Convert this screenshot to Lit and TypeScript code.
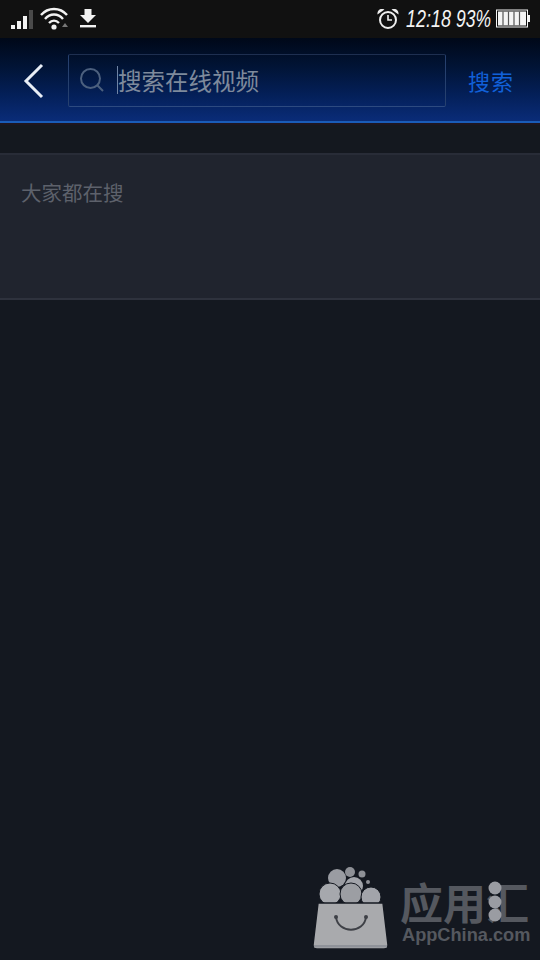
import { LitElement, css, html } from "lit";
import { customElement } from "lit/decorators.js";

@customElement("app-root")
export class AppRoot extends LitElement {
  static styles = css`
    :host {
      display: block;
      position: relative;
      width: 540px;
      height: 960px;
      overflow: hidden;
      background: #141820;
      font-family: "Noto Sans CJK SC", sans-serif;
    }
    .status {
      height: 38px;
      background: #111111;
      display: flex;
      align-items: center;
      justify-content: space-between;
      padding: 0 10px 0 11px;
      box-sizing: border-box;
    }
    .status-group {
      display: flex;
      align-items: center;
    }
    /* the digits are tall and narrow, so squeeze a regular face */
    .time,
    .pct {
      display: inline-block;
      color: #f4f4f4;
      font: italic 23px/1 "Liberation Sans", sans-serif;
      white-space: nowrap;
      transform-origin: left center;
    }
    .time {
      width: 45px;
      margin: 0 5px 0 7px;
      transform: scaleX(0.78);
    }
    .pct {
      width: 35px;
      margin-right: 5px;
      transform: scaleX(0.76);
    }
    .header {
      height: 83px;
      box-sizing: border-box;
      display: flex;
      align-items: center;
      background: linear-gradient(180deg, #000818 0%, #011436 35%, #04205a 70%, #0a2c78 100%);
      padding: 0 0 0 22px;
    }
    .back {
      width: 24px;
      height: 36px;
      margin-right: 22px;
      margin-top: 2px;
    }
    .search {
      width: 378px;
      height: 53px;
      box-sizing: border-box;
      margin-top: 1px;
      border: 1px solid #26406e;
      border-top-color: #1e2f50;
      border-bottom-color: #2d4a80;
      border-radius: 2px;
      display: flex;
      align-items: center;
      padding-left: 10px;
    }
    .caret {
      width: 1px;
      height: 28px;
      background: #6f84a4;
      margin: 0 0 0 12px;
    }
    .placeholder {
      color: #7e8a9c;
      font-size: 23.5px;
      line-height: 28px;
      margin-bottom: 1px;
    }
    .submit {
      color: #1160d8;
      font-size: 22px;
      line-height: 28px;
      margin-left: 22px;
      letter-spacing: 1px;
    }
    .rule {
      height: 2px;
      background: #1a5cb8;
    }
    .rule-dark {
      height: 2px;
      background: #1e1620;
    }
    .gap {
      height: 28px;
      background: #14181f;
    }
    .hot {
      height: 147px;
      box-sizing: border-box;
      background: #20242e;
      border-top: 2px solid #282c37;
      border-bottom: 2px solid #2e323d;
      padding: 23px 0 0 21px;
      color: #5d616b;
      font-size: 20.5px;
      line-height: 28px;
    }
    .mark {
      position: absolute;
      left: 312px;
      top: 864px;
      width: 228px;
      height: 90px;
    }
    .mark-bag {
      position: absolute;
      left: 0;
      top: 0;
    }
    .mark-title {
      position: absolute;
      left: 88px;
      top: 15px;
      color: #55585f;
      font-size: 43px;
      font-weight: 700;
      line-height: 44px;
      white-space: nowrap;
    }
    .mark-dots {
      position: absolute;
      left: 173px;
      top: 16px;
    }
    .mark-url {
      position: absolute;
      left: 90px;
      top: 61px;
      color: #55585f;
      font: 700 18.2px/20px "Liberation Sans", sans-serif;
      white-space: nowrap;
    }
  `;

  private signal() {
    return html`<svg width="24" height="22" viewBox="0 0 24 22">
      <rect x="0" y="17" width="4" height="4" fill="#f2f2f2" />
      <rect x="6" y="13" width="4" height="8" fill="#f2f2f2" />
      <rect x="12" y="8" width="4" height="13" fill="#f2f2f2" />
      <rect x="18" y="2" width="4" height="19" fill="#4a4a4a" />
    </svg>`;
  }

  private wifi() {
    return html`<svg width="30" height="24" viewBox="0 0 30 24" style="margin-left:5px">
      <g fill="none" stroke="#f2f2f2" stroke-width="2.4">
        <path d="M1 8 C8 0 20 0 27 8" />
        <path d="M5 12 C10 6 18 6 23 12" />
        <path d="M9 16 C12 13 16 13 19 16" />
      </g>
      <circle cx="14" cy="20" r="2.6" fill="#f2f2f2" />
      <path d="M22 20 L25 16 L28 20 Z" fill="#777" />
    </svg>`;
  }

  private download() {
    return html`<svg width="18" height="22" viewBox="0 0 18 22" style="margin-left:9px">
      <path d="M5.5 1 H12.5 V7 H17 L9 15 L1 7 H5.5 Z" fill="#f2f2f2" />
      <rect x="1" y="17" width="16" height="2.4" fill="#f2f2f2" />
    </svg>`;
  }

  private alarm() {
    return html`<svg width="22" height="22" viewBox="0 0 22 22">
      <circle cx="11" cy="12" r="8" fill="none" stroke="#eee" stroke-width="2" />
      <path d="M11 7 V12 H15" fill="none" stroke="#eee" stroke-width="1.6" />
      <path d="M0.5 6.5 C0 2 3.5 0 7.5 1.5 Z M21.5 6.5 C22 2 18.5 0 14.5 1.5 Z" fill="#eee" />
    </svg>`;
  }

  private battery() {
    return html`<svg width="34" height="20" viewBox="0 0 34 20">
      <rect x="0.5" y="1" width="31" height="17" fill="#111" stroke="#f4f4f4" />
      <rect x="2" y="2.5" width="28" height="14" fill="#f4f4f4" />
      <path d="M7 2.5 V16.5 M12.5 2.5 V16.5 M18 2.5 V16.5 M23.5 2.5 V16.5" stroke="#555" stroke-width="1.2" />
      <rect x="32" y="6" width="2" height="7" fill="#f4f4f4" />
    </svg>`;
  }

  private bag() {
    return html`<svg class="mark-bag" width="80" height="88" viewBox="0 0 80 88">
      <circle cx="38" cy="8" r="5" fill="#8e9096" />
      <circle cx="50" cy="10" r="3.5" fill="#8e9096" />
      <circle cx="56" cy="18" r="2" fill="#8e9096" />
      <circle cx="25" cy="14" r="9" fill="#9a9ca2" />
      <circle cx="42" cy="22" r="9" fill="#a2a4aa" />
      <circle cx="18" cy="30" r="11" fill="#a6a8ad" stroke="#141820" />
      <circle cx="39" cy="30" r="11" fill="#9c9ea3" stroke="#141820" />
      <circle cx="59" cy="33" r="10" fill="#a2a4aa" stroke="#141820" />
      <path d="M6 39 H71 L76 81 Q76 85 72 85 H5 Q1 85 1 81 Z" fill="#a9aaad" stroke="#141820" stroke-width="1.5" />
      <rect x="2" y="81" width="73" height="2.5" fill="#8f9299" />
      <path d="M24 53 C26 70 52 70 54 53" fill="none" stroke="#3e4046" stroke-width="2" />
      <circle cx="24" cy="53" r="2" fill="#3e4046" />
      <circle cx="54" cy="53" r="2" fill="#3e4046" />
    </svg>`;
  }

  render() {
    return html`
      <div class="status">
        <div class="status-group">${this.signal()}${this.wifi()}${this.download()}</div>
        <div class="status-group">
          ${this.alarm()}
          <span class="time">12:18</span>
          <span class="pct">93%</span>
          ${this.battery()}
        </div>
      </div>
      <div class="header">
        <svg class="back" viewBox="0 0 24 36">
          <path d="M20 2 L4 18 L20 34" fill="none" stroke="#e8eef6" stroke-width="3" />
        </svg>
        <div class="search">
          <svg width="26" height="26" viewBox="0 0 26 26">
            <circle cx="11.5" cy="11.5" r="9.5" fill="none" stroke="#4c607e" stroke-width="2" />
            <path d="M18.5 18.5 L24 24" stroke="#4c607e" stroke-width="2" />
          </svg>
          <span class="caret"></span>
          <span class="placeholder">搜索在线视频</span>
        </div>
        <span class="submit">搜索</span>
      </div>
      <div class="rule"></div>
      <div class="rule-dark"></div>
      <div class="gap"></div>
      <div class="hot">大家都在搜</div>
      <div class="mark">
        ${this.bag()}
        <span class="mark-title">应用汇</span>
        <svg class="mark-dots" width="20" height="44" viewBox="0 0 20 44">
          <circle cx="10" cy="8" r="6.5" fill="#9a9ca2" />
          <circle cx="10" cy="22" r="6.5" fill="#9a9ca2" />
          <circle cx="10" cy="35" r="6.5" fill="#9a9ca2" />
        </svg>
        <span class="mark-url">AppChina.com</span>
      </div>
    `;
  }
}
